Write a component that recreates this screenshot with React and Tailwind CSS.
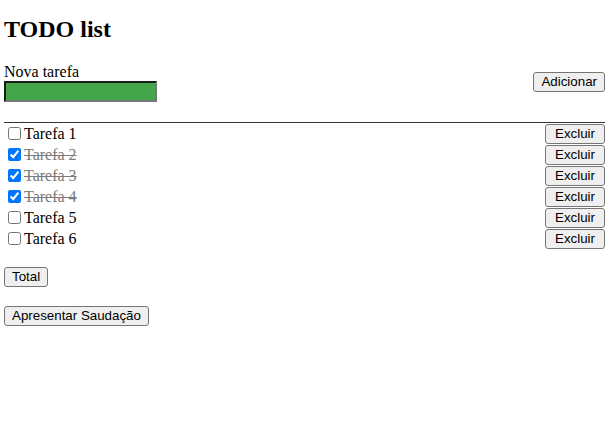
const tasks = [
  { id: 1, title: 'Tarefa 1', done: false },
  { id: 2, title: 'Tarefa 2', done: true },
  { id: 3, title: 'Tarefa 3', done: true },
  { id: 4, title: 'Tarefa 4', done: true },
  { id: 5, title: 'Tarefa 5', done: false },
  { id: 6, title: 'Tarefa 6', done: false },
];

const btn =
  "bg-[#efefef] border border-[#767676] rounded-[3px] px-[7px] h-[20px] text-[13.33px] leading-[16px] text-black font-['Liberation_Sans',Arial,sans-serif]";

export default function App() {
  return (
    <div className="min-h-[432px] bg-white pl-1 pr-2 text-black font-['Liberation_Serif','Times_New_Roman',serif] text-[16px]">
      <h1 className="pt-[16px] pb-[19px] text-[24px] font-bold leading-[27px]">TODO list</h1>

      {/* New task */}
      <div className="flex items-center justify-between">
        <div>
          <label className="block leading-[19px]">Nova tarefa</label>
          <input
            type="text"
            className="block w-[153px] h-[21px] bg-[#43a64b] border-2 border-t-[#1a1a1a] border-l-[#1a1a1a] border-b-[#767676] border-r-[#767676] outline-none"
          />
        </div>
        <button className={btn}>Adicionar</button>
      </div>

      {/* List */}
      <ul className="mt-[20px] border-t border-[#333]">
        {tasks.map((t) => (
          <li key={t.id} className="flex items-center justify-between h-[21px]">
            <label className="flex items-center">
              <input
                type="checkbox"
                defaultChecked={t.done}
                className="w-[13px] h-[13px] ml-[4px] mr-[3px]"
              />
              <span className={t.done ? 'line-through text-[#7b7b7b]' : ''}>{t.title}</span>
            </label>
            <button className={btn + ' w-[60px]'}>Excluir</button>
          </li>
        ))}
      </ul>

      <div className="flex mt-[18px]">
        <button className={btn}>Total</button>
      </div>
      <div className="flex mt-[19px]">
        <button className={btn}>Apresentar Saudação</button>
      </div>
    </div>
  );
}
